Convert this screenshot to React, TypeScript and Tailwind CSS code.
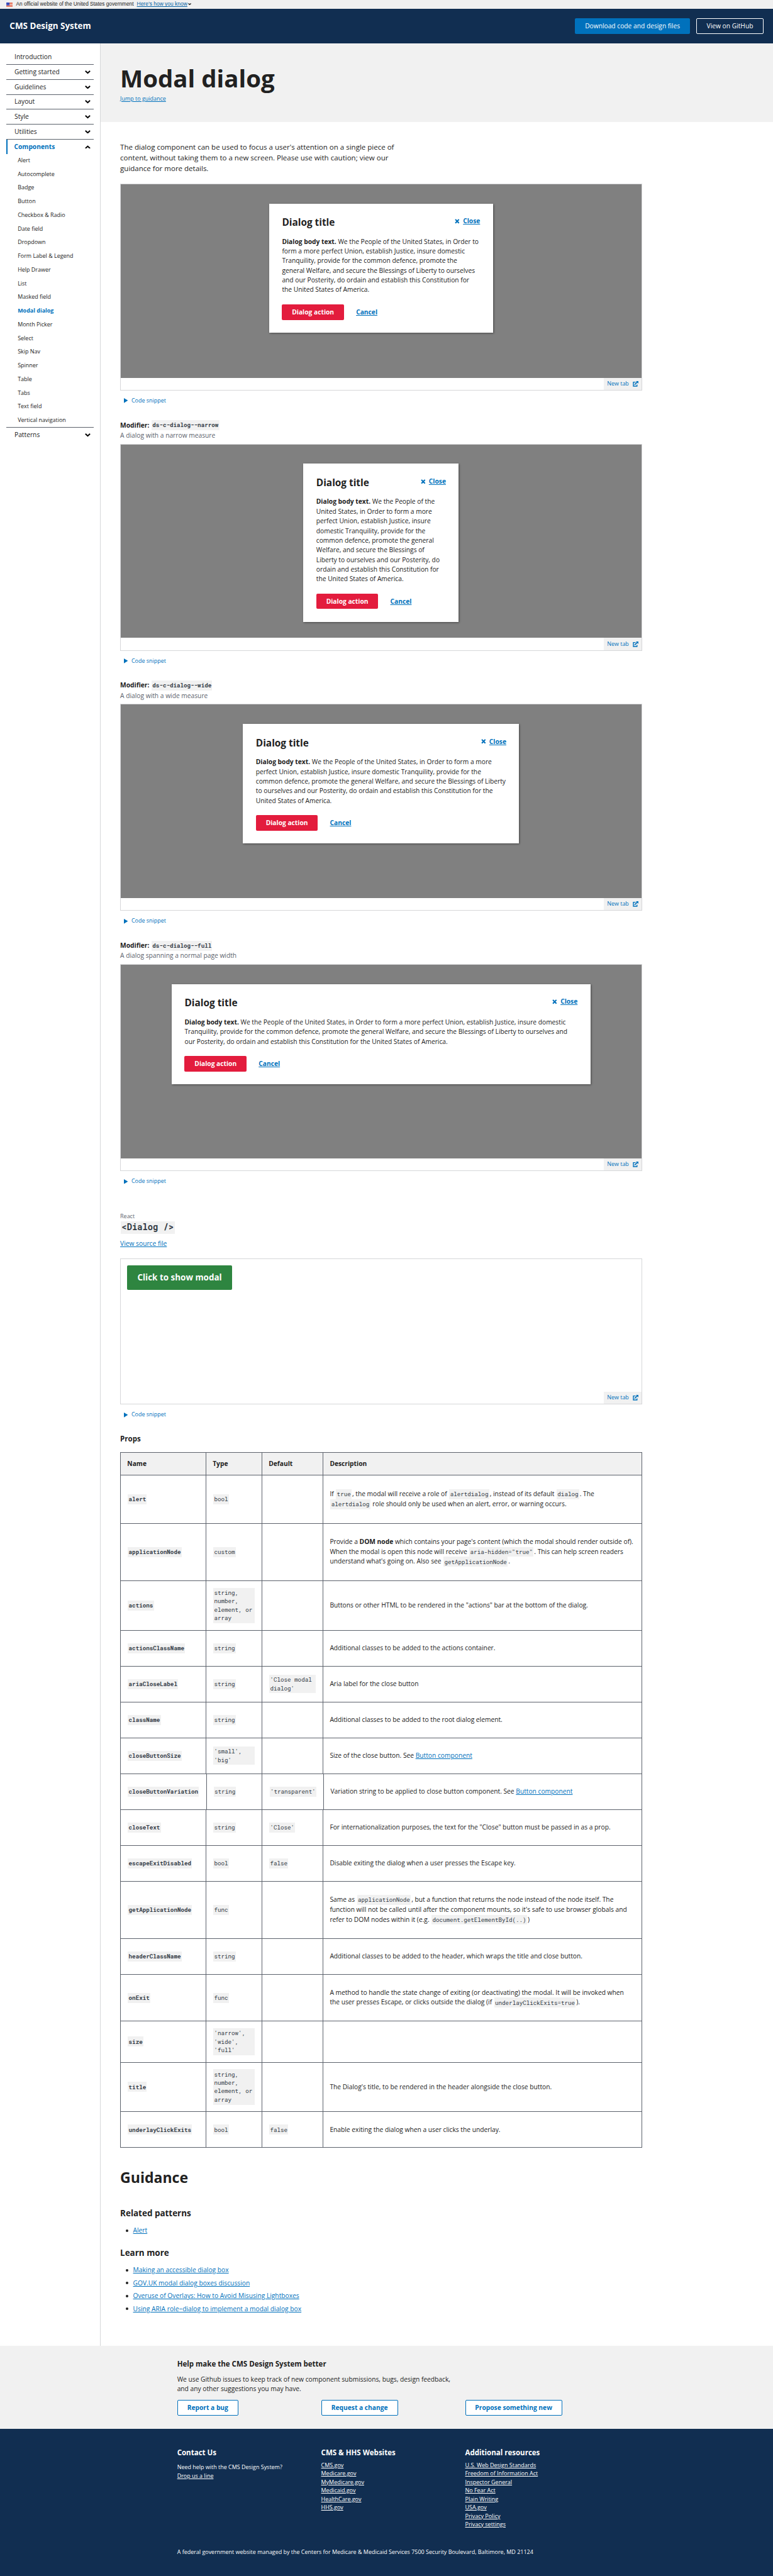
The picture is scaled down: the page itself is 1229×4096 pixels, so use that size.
import React from 'react';

// One spacing step is 4 design pixels; the whole page is drawn at 0.64 scale.
const SCALE =
  "[--spacing:2.5604px] [--text-xs:8.194px] [--text-sm:8.962px] [--text-base:10.242px] [--text-lg:11.523px] [--text-xl:13.443px] [--text-2xl:15.363px] [--text-4xl:23.045px] [--text-6xl:38.408px]";

function Chevron({ up = false, className = 'w-3.5 h-2.25' }: { up?: boolean; className?: string }) {
  return (
    <svg viewBox="0 0 14 9" className={className} fill="none" stroke="#000" strokeWidth="3.2">
      <path d={up ? 'M1.3 7.7 7 2.4l5.7 5.3' : 'M1.3 1.3 7 6.6l5.7-5.3'} />
    </svg>
  );
}

function Flag() {
  return (
    <svg viewBox="0 0 16 11" className="h-2.75 w-4">
      <rect width="16" height="11" fill="#fff" />
      {[0, 2, 4, 6, 8, 10].map((y) => (
        <rect key={y} y={y} width="16" height="1.1" fill="#db3e1f" />
      ))}
      <rect width="8" height="7" fill="#1e33b1" />
      {[1, 3, 5].map((y) =>
        [1, 3, 5, 7].map((x) => <rect key={`${x}-${y}`} x={x - 0.4 + (y === 3 ? -0.6 : 0)} y={y} width="0.8" height="0.8" fill="#fff" />)
      )}
    </svg>
  );
}

function Code({ children, bold = false }: { children: React.ReactNode; bold?: boolean }) {
  return (
    <code
      className={`mx-px inline-block bg-[#f1f1f1] p-0.5 font-['Roboto_Mono','Liberation_Mono',monospace] text-[0.9em] leading-5.25 text-[#323a45] ${
        bold ? 'font-bold' : 'font-normal'
      }`}
    >
      {children}
    </code>
  );
}

function Link({ children }: { children: React.ReactNode }) {
  return (
    <a href="#" className="text-[#0071bc] underline">
      {children}
    </a>
  );
}

const sections = ['Getting started', 'Guidelines', 'Layout', 'Style', 'Utilities'];
const components = [
  'Alert', 'Autocomplete', 'Badge', 'Button', 'Checkbox & Radio', 'Date field', 'Dropdown',
  'Form Label & Legend', 'Help Drawer', 'List', 'Masked field', 'Modal dialog', 'Month Picker',
  'Select', 'Skip Nav', 'Spinner', 'Table', 'Tabs', 'Text field', 'Vertical navigation',
];

function Sidebar() {
  return (
    <nav className="w-62.25 shrink-0 pt-3.75 pr-4 pl-4">
      <div className="flex h-9.25 items-center pl-5">Introduction</div>
      {sections.map((s) => (
        <div key={s} className="flex h-9.25 items-center justify-between border-t border-[#5b616b] pr-2 pl-5">
          {s}
          <Chevron />
        </div>
      ))}
      <div className="border-t border-[#5b616b]">
        <div className="flex h-9.25 items-center justify-between border-l-[2.56px] border-[#0071bc] pr-2 pl-4 font-bold text-[#0071bc]">
          Components
          <Chevron up />
        </div>
      </div>
      <ul className="-mt-px text-sm">
        {components.map((c) => (
          <li key={c} className={`flex h-8.5 items-center pl-7 ${c === 'Modal dialog' ? 'font-bold text-[#0071bc]' : ''}`}>
            {c}
          </li>
        ))}
      </ul>
      <div className="flex h-9.25 items-center justify-between border-t border-[#5b616b] pr-2 pl-5">
        Patterns
        <Chevron />
      </div>
    </nav>
  );
}

function Dialog({ width }: { width: string }) {
  return (
    <div className={`${width} bg-white p-8 shadow-[1px_1px_3px_rgba(0,0,0,0.45)]`}>
      <div className="flex h-12.75 items-start justify-between">
        <h2 className="text-2xl leading-8 font-bold">Dialog title</h2>
        <span className="flex h-6 items-center gap-2 font-bold text-[#0071bc]">
          <svg viewBox="0 0 12 12" className="size-3" stroke="currentColor" strokeWidth="3.3">
            <path d="M1.6 1.4 10.4 10.6M10.4 1.4 1.6 10.6" />
          </svg>
          <span className="underline">Close</span>
        </span>
      </div>
      <p className="leading-6">
        <strong>Dialog body text.</strong> We the People of the United States, in Order to form a more perfect Union,
        establish Justice, insure domestic Tranquility, provide for the common defence, promote the general Welfare,
        and secure the Blessings of Liberty to ourselves and our Posterity, do ordain and establish this Constitution
        for the United States of America.
      </p>
      <div className="mt-6 flex h-9.5 items-center font-bold">
        <button className="h-9.5 w-38.5 rounded-[2px] bg-[#e31c3d] text-white">Dialog action</button>
        <button className="ml-7.5 text-[#0071bc] underline">Cancel</button>
      </div>
    </div>
  );
}

function NewTab() {
  return (
    <div className="flex h-7.5 items-center gap-2.25 bg-[#f1f1f1] px-2 text-sm text-[#0071bc]">
      New tab
      <svg viewBox="0 0 14 14" className="size-3.5" fill="none" stroke="currentColor" strokeWidth="2.2">
        <path d="M7 2.6H1.6v10h9V8.5" />
        <path d="M4.6 9 11 2.6" strokeWidth="2.6" />
        <path d="M7.8 0H14v6.2z" fill="currentColor" stroke="none" />
      </svg>
    </div>
  );
}

function Snippet() {
  return (
    <div className="mt-3.75 flex h-5.25 items-center pl-2.5 text-sm text-[#0071bc]">
      <svg viewBox="0 0 10 12" className="mr-2 h-3 w-2.5" fill="currentColor">
        <path d="M0 0 10 6 0 12z" />
      </svg>
      Code snippet
    </div>
  );
}

function Example({ width }: { width: string }) {
  return (
    <>
      <div className="flex h-128.5 flex-col border border-[#d6d7d9]">
        <div className="flex min-h-0 flex-1 items-start justify-center bg-[#808080] pt-12">
          <Dialog width={width} />
        </div>
        <div className="flex shrink-0 justify-end">
          <NewTab />
        </div>
      </div>
      <Snippet />
    </>
  );
}

function Modifier({ name, note, width }: { name: string; note: string; width: string }) {
  return (
    <section>
      <h3 className="mt-9.25 flex h-6.75 items-center font-bold">
        Modifier:&nbsp;
        <Code bold>{name}</Code>
      </h3>
      <p className="mb-[5.44px] h-6 leading-6 text-[#5b616b]">{note}</p>
      <Example width={width} />
    </section>
  );
}

type Row = { name: string; type: string; def?: string; desc?: React.ReactNode; h: string };

const rows: Row[] = [
  {
    name: 'alert', type: 'bool', h: 'h-29.75',
    desc: (
      <>
        If <Code>true</Code>, the modal will receive a role of <Code>alertdialog</Code>, instead of its default{' '}
        <Code>dialog</Code>. The <Code>alertdialog</Code> role should only be used when an alert, error, or warning
        occurs.
      </>
    ),
  },
  {
    name: 'applicationNode', type: 'custom', h: 'h-35.75',
    desc: (
      <>
        Provide a <strong>DOM node</strong> which contains your page's content (which the modal should render outside
        of). When the modal is open this node will receive <Code>aria-hidden="true"</Code>. This can help screen
        readers understand what's going on. Also see <Code>getApplicationNode</Code>.
      </>
    ),
  },
  {
    name: 'actions', type: 'string, number, element, or array', h: 'h-30.75',
    desc: 'Buttons or other HTML to be rendered in the "actions" bar at the bottom of the dialog.',
  },
  { name: 'actionsClassName', type: 'string', h: 'h-22.25', desc: 'Additional classes to be added to the actions container.' },
  { name: 'ariaCloseLabel', type: 'string', def: "'Close modal dialog'", h: 'h-22.25', desc: 'Aria label for the close button' },
  { name: 'className', type: 'string', h: 'h-22.25', desc: 'Additional classes to be added to the root dialog element.' },
  {
    name: 'closeButtonSize', type: "'small', 'big'", h: 'h-22.25',
    desc: <>Size of the close button. See <Link>Button component</Link></>,
  },
  {
    name: 'closeButtonVariation', type: 'string', def: "'transparent'", h: 'h-22.25',
    desc: <>Variation string to be applied to close button component. See <Link>Button component</Link></>,
  },
  {
    name: 'closeText', type: 'string', def: "'Close'", h: 'h-22.25',
    desc: 'For internationalization purposes, the text for the "Close" button must be passed in as a prop.',
  },
  { name: 'escapeExitDisabled', type: 'bool', def: 'false', h: 'h-22.25', desc: 'Disable exiting the dialog when a user presses the Escape key.' },
  {
    name: 'getApplicationNode', type: 'func', h: 'h-35.75',
    desc: (
      <>
        Same as <Code>applicationNode</Code>, but a function that returns the node instead of the node itself. The
        function will not be called until after the component mounts, so it's safe to use browser globals and refer to
        DOM nodes within it (e.g. <Code>document.getElementById(..)</Code>)
      </>
    ),
  },
  { name: 'headerClassName', type: 'string', h: 'h-22.25', desc: 'Additional classes to be added to the header, which wraps the title and close button.' },
  {
    name: 'onExit', type: 'func', h: 'h-29',
    desc: (
      <>
        A method to handle the state change of exiting (or deactivating) the modal. It will be invoked when the user
        presses Escape, or clicks outside the dialog (if <Code>underlayClickExits=true</Code>).
      </>
    ),
  },
  { name: 'size', type: "'narrow', 'wide', 'full'", h: 'h-25.5' },
  {
    name: 'title', type: 'string, number, element, or array', h: 'h-30.75',
    desc: "The Dialog's title, to be rendered in the header alongside the close button.",
  },
  { name: 'underlayClickExits', type: 'bool', def: 'false', h: 'h-22.25', desc: 'Enable exiting the dialog when a user clicks the underlay.' },
];

const cell = 'flex items-center border-r border-b border-[#5b616b] px-4 leading-6';

function PropsTable() {
  return (
    <div role="table" className="mt-5.25 border-t border-l border-[#5b616b]">
      <div role="row" className="grid h-14.25 grid-cols-[53.1fr_34.8fr_38fr_198fr] bg-[#f1f1f1] font-bold">
        {['Name', 'Type', 'Default', 'Description'].map((h) => (
          <div role="columnheader" key={h} className={cell}>
            {h}
          </div>
        ))}
      </div>
      {rows.map((r) => (
        <div role="row" key={r.name} className={`grid grid-cols-[53.1fr_34.8fr_38fr_198fr] ${r.h}`}>
          <div role="cell" className={cell}>
            <Code bold>{r.name}</Code>
          </div>
          <div role="cell" className={cell}>
            <Code>{r.type}</Code>
          </div>
          <div role="cell" className={cell}>{r.def && <Code>{r.def}</Code>}</div>
          <div role="cell" className={cell}>
            <p>{r.desc}</p>
          </div>
        </div>
      ))}
    </div>
  );
}

function LinkList({ items, className }: { items: string[]; className: string }) {
  return (
    <ul className={`flex flex-col gap-2 ${className}`}>
      {items.map((t) => (
        <li key={t} className="flex h-6 items-center">
          <span className="mr-3 ml-3.5 size-1.5 rounded-full bg-[#212121]" />
          <Link>{t}</Link>
        </li>
      ))}
    </ul>
  );
}

const cols = 'grid grid-cols-[repeat(3,89.4fr)] w-268.25';

export default function App() {
  return (
    <div
      className={`${SCALE} flex h-[4096px] w-full flex-col overflow-hidden bg-white font-['Open_Sans',sans-serif] text-base leading-6 text-[#212121]`}
    >
      <div className="flex h-5.5 shrink-0 items-center bg-[#f0f0f0] pl-4 font-['Liberation_Sans',sans-serif] text-[8.28px] text-[#1b1b1b]">
        <Flag />
        <span className="ml-2">An official website of the United States government</span>
        <a href="#" className="ml-2 text-[8.48px] text-[#005ea2] underline">Here’s how you know</a>
        <Chevron className="ml-0.5 h-1.25 w-2" />
      </div>

      <header className="flex h-21.5 shrink-0 items-center bg-[#112e51] px-6 text-white">
        <div className="flex-1 text-xl font-bold">CMS Design System</div>
        <div className="mr-4 flex h-9.5 w-71.5 items-center justify-center rounded-[2px] bg-[#0071bc]">
          Download code and design files
        </div>
        <div className="flex h-9.5 w-41.5 items-center justify-center rounded-[2px] border border-white">View on GitHub</div>
      </header>

      <div className="flex h-1430 shrink-0">
        <Sidebar />
        <main className="flex-1 border-l border-[#d6d7d9]">
          <div className="h-48.75 bg-[#f1f1f1] pt-12.5 pl-12">
            <h1 className="text-6xl leading-18 font-bold">Modal dialog</h1>
            <div className="mt-1 text-sm leading-5.25">
              <Link>Jump to guidance</Link>
            </div>
          </div>

          <div className="ml-12 w-324 pt-12">
            <p className="mb-6 w-174 text-lg leading-6.75">
              The dialog component can be used to focus a user's attention on a single piece of content, without taking
              them to a new screen. Please use with caution; view our guidance for more details.
            </p>

            <Example width="w-139" />
            <Modifier name="ds-c-dialog--narrow" note="A dialog with a narrow measure" width="w-96.5" />
            <Modifier name="ds-c-dialog--wide" note="A dialog with a wide measure" width="w-171.5" />
            <Modifier name="ds-c-dialog--full" note="A dialog spanning a normal page width" width="w-260" />

            <div className="mt-16.5 text-sm leading-5.25 text-[#5b616b]">React</div>
            <h2 className="mt-0.5 flex h-7.75 items-center text-2xl">
              <code className="mx-px bg-[#f1f1f1] px-0.5 font-['Roboto_Mono','Liberation_Mono',monospace] text-[0.9em] leading-7.75 font-bold text-[#323a45]">
                {'<Dialog />'}
              </code>
            </h2>
            <div className="mt-3 mb-6.25 h-6">
              <Link>View source file</Link>
            </div>
            <div className="flex h-90.75 flex-col justify-between border border-[#d6d7d9]">
              <button className="mt-4 ml-4 h-15.25 w-65 rounded-[2px] bg-[#2e8540] text-xl font-bold text-white">
                Click to show modal
              </button>
              <div className="flex justify-end">
                <NewTab />
              </div>
            </div>
            <Snippet />

            <h3 className="mt-9.25 text-lg leading-6 font-bold">Props</h3>
            <PropsTable />

            <h2 className="mt-12.5 text-4xl leading-12 font-bold">Guidance</h2>
            <h3 className="mt-13 text-xl leading-7 font-bold">Related patterns</h3>
            <LinkList className="mt-4" items={['Alert']} />
            <h3 className="mt-7.5 text-xl leading-7 font-bold">Learn more</h3>
            <LinkList
              className="mt-4"
              items={[
                'Making an accessible dialog box',
                'GOV.UK modal dialog boxes discussion',
                'Overuse of Overlays: How to Avoid Misusing Lightboxes',
                'Using ARIA role=dialog to implement a modal dialog box',
              ]}
            />
          </div>
        </main>
      </div>

      <section className="h-51.25 shrink-0 bg-[#f1f1f1] pt-8 pl-110">
        <h3 className="text-lg leading-6 font-bold">Help make the CMS Design System better</h3>
        <p className="mt-3.75 w-172">
          We use Github issues to keep track of new component submissions, bugs, design feedback, and any other
          suggestions you may have.
        </p>
        <div className={`${cols} mt-3.75 text-center leading-9 font-bold text-[#0071bc]`}>
          <button className="h-9.5 w-38 rounded-[2px] border border-[#0071bc] bg-white">Report a bug</button>
          <button className="h-9.5 w-47.75 rounded-[2px] border border-[#0071bc] bg-white">Request a change</button>
          <button className="h-9.5 w-60.25 rounded-[2px] border border-[#0071bc] bg-white">Propose something new</button>
        </div>
      </section>

      <footer className="flex-1 bg-[#112e51] pt-12 pl-110 text-sm leading-5.25 text-white">
        <div className={`${cols} h-61`}>
          <div>
            <h3 className="text-lg leading-6 font-bold">Contact Us</h3>
            <p className="mt-3.25">Need help with the CMS Design System?</p>
            <a href="#" className="underline">Drop us a line</a>
          </div>
          <div>
            <h3 className="mb-2 text-lg leading-6 font-bold">CMS &amp; HHS Websites</h3>
            {['CMS.gov', 'Medicare.gov', 'MyMedicare.gov', 'Medicaid.gov', 'HealthCare.gov', 'HHS.gov'].map((t) => (
              <div key={t} className="underline">{t}</div>
            ))}
          </div>
          <div>
            <h3 className="mb-2 text-lg leading-6 font-bold">Additional resources</h3>
            {[
              'U.S. Web Design Standards', 'Freedom of Information Act', 'Inspector General', 'No Fear Act',
              'Plain Writing', 'USA.gov', 'Privacy Policy', 'Privacy settings',
            ].map((t) => (
              <div key={t} className="underline">{t}</div>
            ))}
          </div>
        </div>
        <p className="mt-1">
          A federal government website managed by the Centers for Medicare &amp; Medicaid Services 7500 Security
          Boulevard, Baltimore, MD 21124
        </p>
      </footer>
    </div>
  );
}
